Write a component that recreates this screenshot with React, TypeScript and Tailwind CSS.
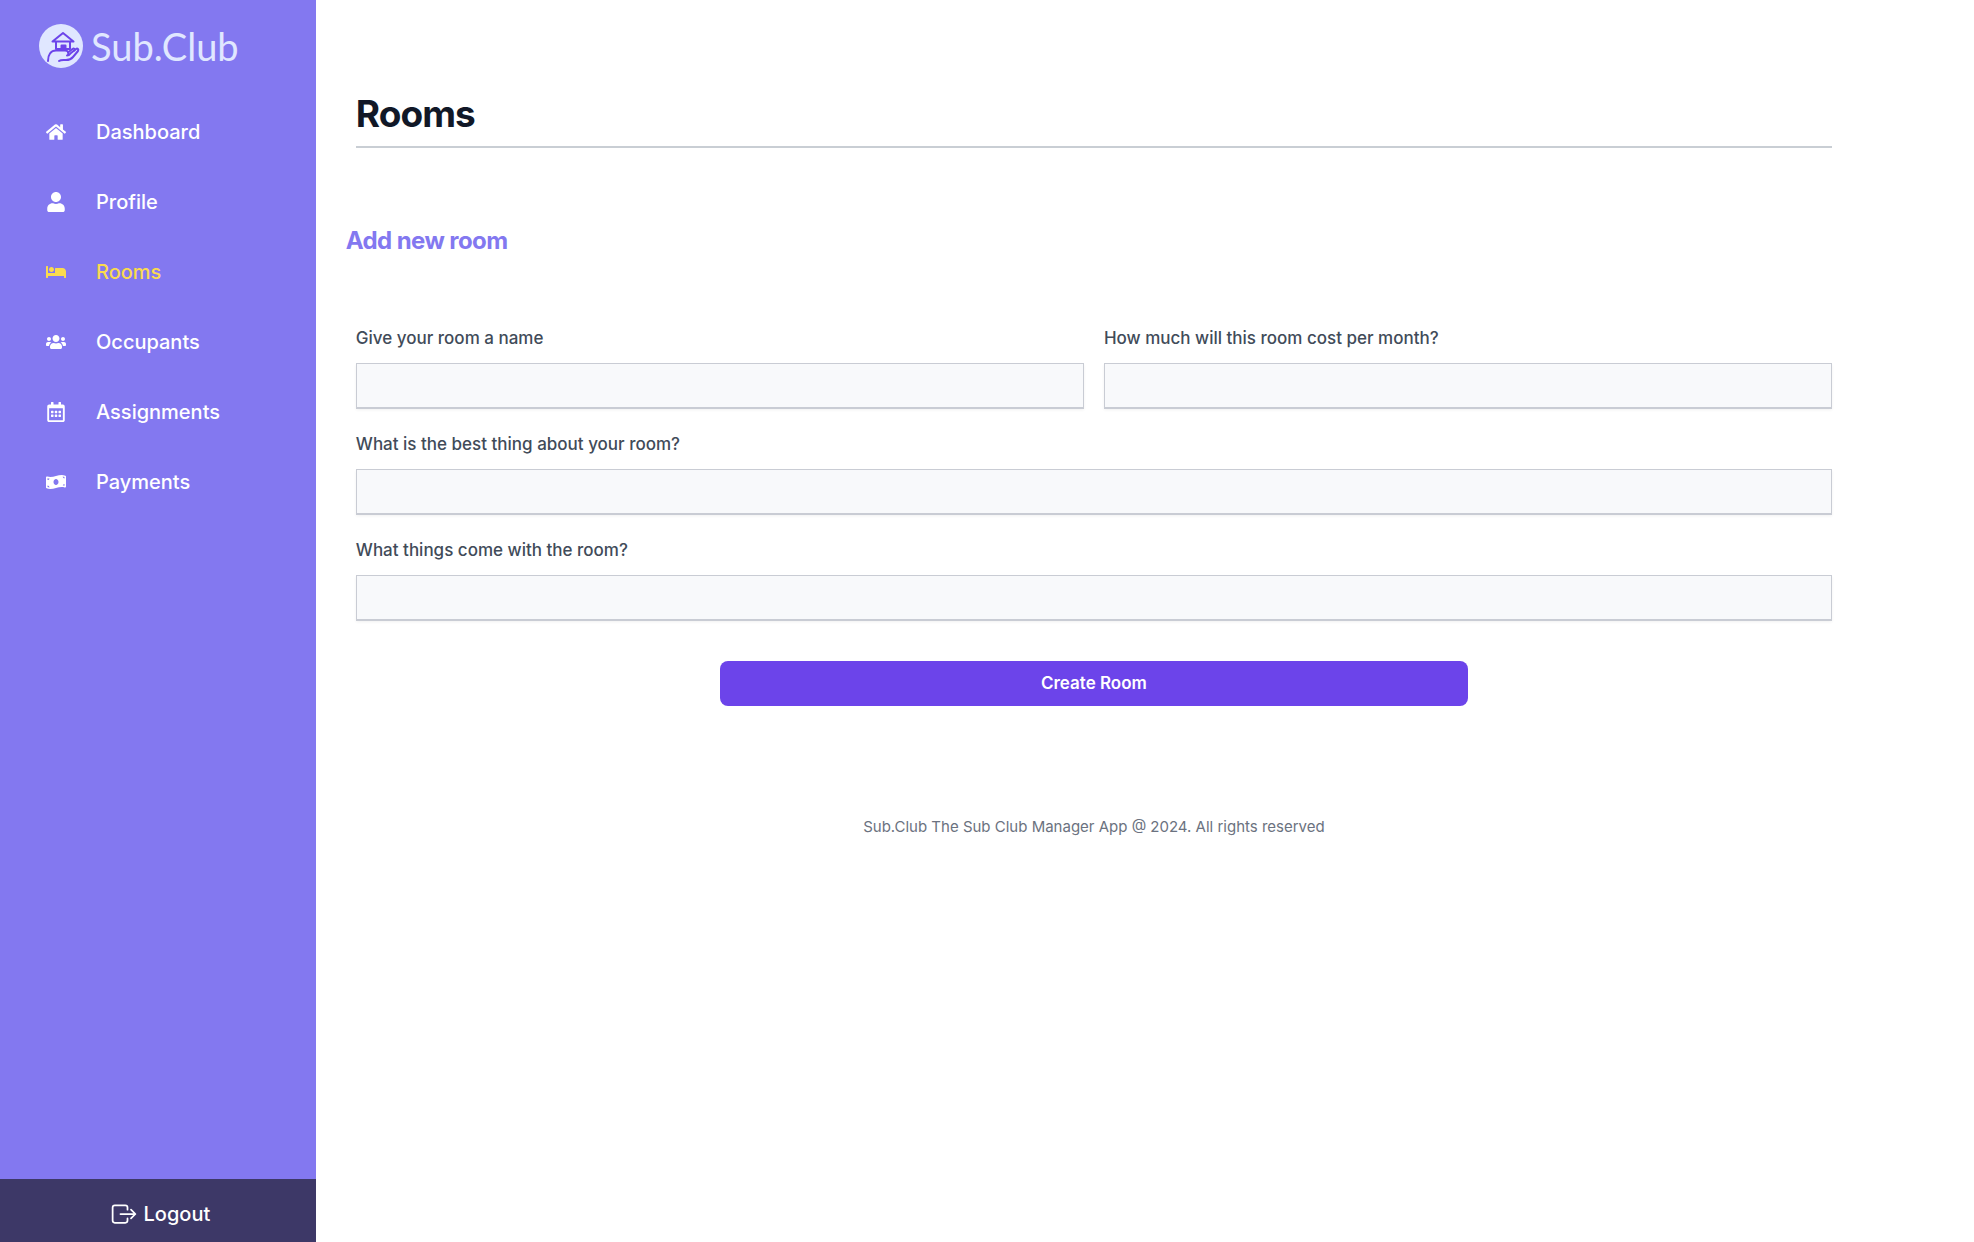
import type { ComponentType } from "react";
import { FaBed, FaHome, FaMoneyBillWave, FaRegCalendarAlt, FaUser, FaUsers } from "react-icons/fa";
import { IoExitOutline } from "react-icons/io5";

type NavItem = { label: string; icon: ComponentType<{ className?: string }>; active?: boolean };

const navItems: NavItem[] = [
  { label: "Dashboard", icon: FaHome },
  { label: "Profile", icon: FaUser },
  { label: "Rooms", icon: FaBed, active: true },
  { label: "Occupants", icon: FaUsers },
  { label: "Assignments", icon: FaRegCalendarAlt },
  { label: "Payments", icon: FaMoneyBillWave },
];

function LogoMark() {
  return (
    <svg viewBox="0 0 44 44" className="size-11" fill="none" aria-hidden="true">
      <circle cx="22" cy="22" r="22" fill="#e0e7ff" />
      <g stroke="#6c44ea" strokeWidth="2" strokeLinecap="round" strokeLinejoin="round">
        <path d="M13.5 17.500 24 9 34.500 17.500Z" />
        <path d="M17 18v7M31 18v7M17 25h14" />
        <path d="M22.500 25v-3.500h4V25Z" fill="#6c44ea" />
        <path d="M9 37c0-6.500 3-10.500 8-10.500h9c3 0 4 2 3 4.500" />
        <path d="M28 31.500c2 0 3-1 4-2.500l5-4c1.500-1 3 .500 2 2l-5 6c-2 2.500-4 3-7 3-2.500 0-5-.500-7 1" />
        <path d="M29 28.500 33.500 25c1.500-1 2.500 0 2 1.500" />
      </g>
    </svg>
  );
}

function Sidebar() {
  return (
    <aside className="flex w-[16%] shrink-0 flex-col bg-[#8378f0]">
      <a href="#" className="flex items-center gap-2 pt-6 pl-[39px] text-[#e0e7ff]">
        <LogoMark />
        <span className="font-['Lato',sans-serif] text-[38px] leading-11">Sub.Club</span>
      </a>
      <nav className="mt-[29px] flex flex-col">
        {navItems.map(({ label, icon: Icon, active }) => (
          <a
            key={label}
            href="#"
            aria-current={active ? "page" : undefined}
            className={`flex h-[70px] items-center gap-[30px] pl-[46px] text-[20px] font-medium ${active ? "text-[#fadb4e]" : "text-white"}`}
          >
            <Icon className="size-5" />
            {label}
          </a>
        ))}
      </nav>
      <button type="button" className="mt-auto flex h-[63px] items-center justify-center gap-1.5 bg-[#3d3867] pt-1.5 pl-1 text-[20px] font-medium text-white">
        <IoExitOutline className="size-7" />
        Logout
      </button>
    </aside>
  );
}

function Field({ id, label, wide }: { id: string; label: string; wide?: boolean }) {
  return (
    <div className={wide ? "col-span-2" : ""}>
      <label htmlFor={id} className="block text-[17px] leading-[26px] font-medium text-[#414b59]">
        {label}
      </label>
      <input
        id={id}
        type="text"
        className="mt-3 block h-[45px] w-full border border-[#c9ccd4] bg-[#f8f9fb] px-4 text-[17px] text-[#414b59] shadow-[0_1px_0_#c9ccd4,0_2px_3px_rgba(0,0,0,0.06)] outline-none"
      />
    </div>
  );
}

export default function App() {
  return (
    <div className="flex min-h-screen bg-white font-['Inter',sans-serif]">
      <Sidebar />
      <main className="min-w-0 flex-1 pt-[90px] pr-[142px] pl-10">
        <h1 className="border-b-2 border-[#c9ced4] pb-2 text-[37px] leading-12 font-bold tracking-tight text-[#111827]">Rooms</h1>
        <h2 className="mt-[77px] -ml-2.5 text-[24px] leading-8 font-bold tracking-tight text-[#8378f0]">Add new room</h2>
        <form className="mt-[68px]" onSubmit={(e) => e.preventDefault()}>
          <div className="grid grid-cols-2 gap-x-5 gap-y-[23px]">
            <Field id="name" label="Give your room a name" />
            <Field id="cost" label="How much will this room cost per month?" />
            <Field id="best" label="What is the best thing about your room?" wide />
            <Field id="things" label="What things come with the room?" wide />
          </div>
          <div className="-mx-2.5 mt-[41px] flex justify-center">
            <button type="submit" className="h-[45px] w-1/2 rounded-lg bg-[#6c44ea] pt-px text-[17px] font-semibold text-white">
              Create Room
            </button>
          </div>
        </form>
        <footer className="mt-[109px] text-center text-[15px] leading-6 text-[#6b7280]">
          Sub.Club The Sub Club Manager App @ 2024. All rights reserved
        </footer>
      </main>
    </div>
  );
}
